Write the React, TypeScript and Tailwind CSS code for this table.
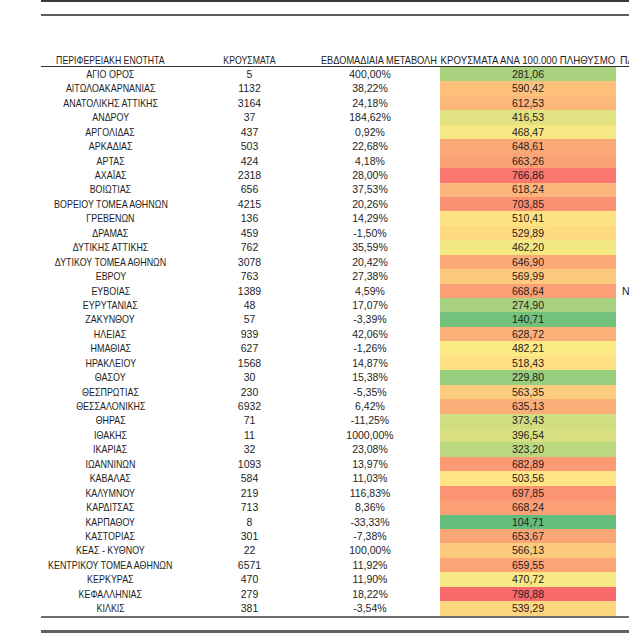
const ROWS: [string, string, string, number][] = [
  ["ΑΓΙΟ ΟΡΟΣ", "5", "400,00%", 281.06],
  ["ΑΙΤΩΛΟΑΚΑΡΝΑΝΙΑΣ", "1132", "38,22%", 590.42],
  ["ΑΝΑΤΟΛΙΚΗΣ ΑΤΤΙΚΗΣ", "3164", "24,18%", 612.53],
  ["ΑΝΔΡΟΥ", "37", "184,62%", 416.53],
  ["ΑΡΓΟΛΙΔΑΣ", "437", "0,92%", 468.47],
  ["ΑΡΚΑΔΙΑΣ", "503", "22,68%", 648.61],
  ["ΑΡΤΑΣ", "424", "4,18%", 663.26],
  ["ΑΧΑΪΑΣ", "2318", "28,00%", 766.86],
  ["ΒΟΙΩΤΙΑΣ", "656", "37,53%", 618.24],
  ["ΒΟΡΕΙΟΥ ΤΟΜΕΑ ΑΘΗΝΩΝ", "4215", "20,26%", 703.85],
  ["ΓΡΕΒΕΝΩΝ", "136", "14,29%", 510.41],
  ["ΔΡΑΜΑΣ", "459", "-1,50%", 529.89],
  ["ΔΥΤΙΚΗΣ ΑΤΤΙΚΗΣ", "762", "35,59%", 462.2],
  ["ΔΥΤΙΚΟΥ ΤΟΜΕΑ ΑΘΗΝΩΝ", "3078", "20,42%", 646.9],
  ["ΕΒΡΟΥ", "763", "27,38%", 569.99],
  ["ΕΥΒΟΙΑΣ", "1389", "4,59%", 668.64],
  ["ΕΥΡΥΤΑΝΙΑΣ", "48", "17,07%", 274.9],
  ["ΖΑΚΥΝΘΟΥ", "57", "-3,39%", 140.71],
  ["ΗΛΕΙΑΣ", "939", "42,06%", 628.72],
  ["ΗΜΑΘΙΑΣ", "627", "-1,26%", 482.21],
  ["ΗΡΑΚΛΕΙΟΥ", "1568", "14,87%", 518.43],
  ["ΘΑΣΟΥ", "30", "15,38%", 229.8],
  ["ΘΕΣΠΡΩΤΙΑΣ", "230", "-5,35%", 563.35],
  ["ΘΕΣΣΑΛΟΝΙΚΗΣ", "6932", "6,42%", 635.13],
  ["ΘΗΡΑΣ", "71", "-11,25%", 373.43],
  ["ΙΘΑΚΗΣ", "11", "1000,00%", 396.54],
  ["ΙΚΑΡΙΑΣ", "32", "23,08%", 323.2],
  ["ΙΩΑΝΝΙΝΩΝ", "1093", "13,97%", 682.89],
  ["ΚΑΒΑΛΑΣ", "584", "11,03%", 503.56],
  ["ΚΑΛΥΜΝΟΥ", "219", "116,83%", 697.85],
  ["ΚΑΡΔΙΤΣΑΣ", "713", "8,36%", 668.24],
  ["ΚΑΡΠΑΘΟΥ", "8", "-33,33%", 104.71],
  ["ΚΑΣΤΟΡΙΑΣ", "301", "-7,38%", 653.67],
  ["ΚΕΑΣ - ΚΥΘΝΟΥ", "22", "100,00%", 566.13],
  ["ΚΕΝΤΡΙΚΟΥ ΤΟΜΕΑ ΑΘΗΝΩΝ", "6571", "11,92%", 659.55],
  ["ΚΕΡΚΥΡΑΣ", "470", "11,90%", 470.72],
  ["ΚΕΦΑΛΛΗΝΙΑΣ", "279", "18,22%", 798.88],
  ["ΚΙΛΚΙΣ", "381", "-3,54%", 539.29],
];

// excel-like 3 colour scale: green -> yellow -> red
const MIN = 104.71;
const MID = 490;
const MAX = 800;
const GREEN = [99, 190, 123];
const YELLOW = [255, 235, 132];
const RED = [248, 105, 107];

function mix(a: number[], b: number[], t: number) {
  const c = a.map((v, i) => Math.round(v + (b[i] - v) * t));
  return `rgb(${c[0]}, ${c[1]}, ${c[2]})`;
}

function scaleColor(v: number) {
  if (v <= MID) return mix(GREEN, YELLOW, Math.max(0, (v - MIN) / (MID - MIN)));
  return mix(YELLOW, RED, Math.min(1, (v - MID) / (MAX - MID)));
}

const fmt = (v: number) => v.toFixed(2).replace(".", ",");

// condensed look of the sheet's label font
function Narrow({ children, scale = "scale-x-[0.85]" }: { children: string; scale?: string }) {
  return <span className={`inline-block shrink-0 ${scale}`}>{children}</span>;
}

export default function App() {
  return (
    <div className="h-[633px] w-[629px] overflow-hidden bg-white text-[#1e1e1e] [font-family:'Liberation_Sans',Arial,sans-serif]">
      <div className="ml-[41px] h-[2px] bg-[#3a3a3a]" />
      <div className="ml-[41px] mt-[12px] h-[2px] bg-[#5c5c5c]" />

      <div className="mt-[38px] ml-[41px] flex h-[13px] items-center whitespace-nowrap border-b border-[#333] text-[10.5px] leading-none">
        <div className="flex w-[139px] shrink-0 justify-center">
          <Narrow scale="scale-x-[0.83]">ΠΕΡΙΦΕΡΕΙΑΚΗ ΕΝΟΤΗΤΑ</Narrow>
        </div>
        <div className="flex w-[139px] shrink-0 justify-center">
          <Narrow scale="scale-x-[0.83]">ΚΡΟΥΣΜΑΤΑ</Narrow>
        </div>
        <div className="flex w-[121px] shrink-0 justify-center pr-[2px]">
          <Narrow scale="scale-x-[0.88]">ΕΒΔΟΜΑΔΙΑΙΑ ΜΕΤΑΒΟΛΗ</Narrow>
        </div>
        <div className="flex w-[176px] shrink-0 justify-center">
          <Narrow scale="scale-x-[0.92]">ΚΡΟΥΣΜΑΤΑ ΑΝΑ 100.000 ΠΛΗΘΥΣΜΟ</Narrow>
        </div>
        <div className="ml-[4px] shrink-0">ΠΛΗΘΥΣΜΟΣ</div>
      </div>

      <div className="ml-[41px]">
        {ROWS.map(([name, cases, change, rate], i) => (
          <div key={name} className="flex h-[14.45px] items-center whitespace-nowrap text-[10.5px] leading-none">
            <div className="flex w-[139px] shrink-0 justify-center">
              <Narrow>{name}</Narrow>
            </div>
            <div className="w-[139px] shrink-0 text-center">{cases}</div>
            <div className="w-[121px] shrink-0 pr-[19px] text-center">{change}</div>
            <div
              className="flex h-full w-[176px] shrink-0 items-center justify-center"
              style={{ backgroundColor: scaleColor(rate) }}
            >
              {fmt(rate)}
            </div>
            {i === 15 && <div className="ml-[6px] shrink-0">ΝΑΙ</div>}
          </div>
        ))}
      </div>

      <div className="ml-[41px] h-[2px] bg-[#6e6e6e]" />
      <div className="ml-[41px] mt-[12px] h-[3px] bg-[#616161]" />
    </div>
  );
}
